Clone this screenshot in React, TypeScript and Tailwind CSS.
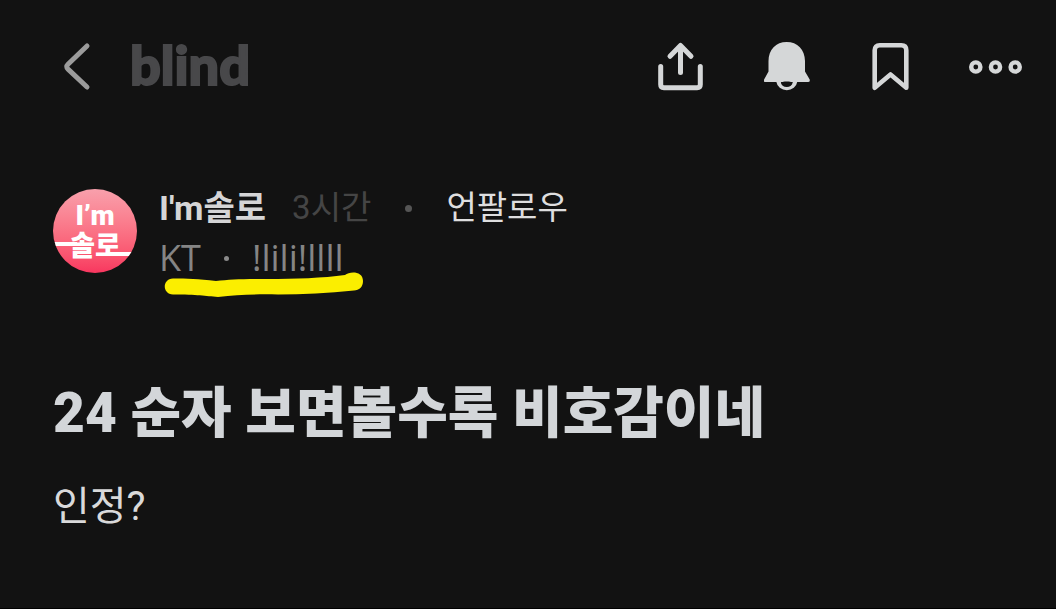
const navIcon = "block text-[#d5d7d8]";

function BackIcon() {
  return (
    <svg className="block text-[#9b9b9b]" width="30" height="50" viewBox="0 0 30 50" fill="none" stroke="currentColor" strokeWidth="5" strokeLinecap="round" strokeLinejoin="round">
      <path d="M25 4L6 22.300Q3.500 24.700 6 27.100L25 45" />
    </svg>
  );
}

function ShareIcon() {
  return (
    <svg className={navIcon} width="48" height="52" viewBox="0 0 48 52" fill="none" stroke="currentColor" strokeWidth="5" strokeLinecap="round" strokeLinejoin="round">
      <path d="M2.7 25.5V43.5Q2.7 46.7 5.9 46.7H39.1Q42.3 46.7 42.3 43.5V25.5" />
      <path d="M22.500 31.500V5M12 15.300L22.500 4.500L33 15.300" />
    </svg>
  );
}

function BellIcon() {
  return (
    <svg className={navIcon} width="48" height="52" viewBox="0 0 48 52" fill="none">
      <path d="M4.5 20C4.5 8.5 12 1 22.7 1S41 8.5 41 20V30.5L45.7 38.5Q46.3 41 44 41H1.5Q-.8 41 .1 38.5L4.5 30.5Z" fill="currentColor" />
      <path d="M14.3 40A8.600 8.200 0 0 0 31.300 40" stroke="currentColor" strokeWidth="4.400" />
      <path d="M17 41.500C19 40 26.500 40 28.500 41.500A5.700 4.500 0 0 1 17 41.500Z" fill="#121212" />
    </svg>
  );
}

function BookmarkIcon() {
  return (
    <svg className={navIcon} width="40" height="52" viewBox="0 0 40 52" fill="none" stroke="currentColor" strokeWidth="4.6" strokeLinejoin="round">
      <path d="M4.7 46.7V9.3Q4.7 4.3 9.7 4.3H31.3Q36.3 4.3 36.3 9.3V46.7L20.5 33.5Z" />
    </svg>
  );
}

function MoreIcon() {
  return (
    <svg className={navIcon} width="56" height="16" viewBox="0 0 56 16" fill="none" stroke="currentColor" strokeWidth="4.4">
      <circle cx="7.8" cy="8" r="4.6" />
      <circle cx="27.5" cy="8" r="4.6" />
      <circle cx="47.2" cy="8" r="4.6" />
    </svg>
  );
}

function TopBar() {
  return (
    <header className="flex items-center justify-between pt-[39px] pr-8 pl-[62px]">
      <div className="flex items-center gap-[38px]">
        <button type="button" aria-label="뒤로">
          <BackIcon />
        </button>
        <a href="#" className="pb-1 [font-family:'Lato',sans-serif] text-[54px] leading-[52px] font-black text-[#48484a] [-webkit-text-stroke:2px_#48484a]">
          blind
        </a>
      </div>
      <nav className="flex items-center gap-[58px]">
        <button type="button" aria-label="공유">
          <ShareIcon />
        </button>
        <button type="button" aria-label="알림">
          <BellIcon />
        </button>
        <button type="button" aria-label="북마크">
          <BookmarkIcon />
        </button>
        <button type="button" aria-label="더보기">
          <MoreIcon />
        </button>
      </nav>
    </header>
  );
}

function ChannelAvatar() {
  return (
    <div className="relative flex size-[84px] shrink-0 flex-col items-center overflow-hidden rounded-full bg-linear-to-b from-[#f8a0ac] to-[#f8365f] pt-[11px] text-[28px] leading-[31px] font-black text-white">
      <span>I’m</span>
      <span>솔로</span>
      {/* strokes running out of the lettering to both edges */}
      <span className="absolute top-[53px] left-0 h-1 w-6 bg-white" />
      <span className="absolute top-[63px] right-0 h-1 w-7 bg-white" />
    </div>
  );
}

function Highlight() {
  return (
    <svg className="absolute top-[38px] left-1" width="202" height="30" viewBox="0 0 202 30" fill="#fbee00">
      <path d="M10 7.500C24 7.500 35 8 53 10C67 8.500 80 8 105 8C132 8 160 7 182 4C187 0 200 0 200 10C200 16 196 19.500 191 19.500C165 22 140 23.500 115 23.500C90 23 75 24 55 26C42 25 35 23.500 10 23.500C-1 23 -1 8 10 7.500Z" />
    </svg>
  );
}

function AuthorRow() {
  return (
    <section className="mt-[84px] flex items-center gap-[22px] px-[53px]">
      <ChannelAvatar />
      <div className="pt-1 text-[33px] leading-[50px]">
        <div className="flex items-center">
          <a href="#" className="text-[34px] font-bold text-[#d5d5d6]">
            I'm솔로
          </a>
          <span className="ml-[26px] text-[#454545]">3시간</span>
          <span className="mx-[34px] size-[7px] rounded-full bg-[#555]" />
          <button type="button" className="text-[#dededf]">
            언팔로우
          </button>
        </div>
        <div className="relative flex items-center [font-family:'Open_Sans',sans-serif] text-[36px] text-[#858585]">
          <span>KT</span>
          <span className="mx-[23px] size-[5px] rounded-full bg-[#8a8a8a]" />
          <span>!lili!llll</span>
          <Highlight />
        </div>
      </div>
    </section>
  );
}

export default function App() {
  return (
    <div className="min-h-screen border-b border-black bg-[#121212] [font-family:'Roboto','Noto_Sans_CJK_KR',sans-serif]">
      <TopBar />
      <main>
        <AuthorRow />
        <article className="mt-[90px] px-[53px]">
          <h1 className="text-[55px] leading-[80px] font-black text-[#d3d6d9]">24 순자 보면볼수록 비호감이네</h1>
          <p className="mt-6 text-[40px] leading-[60px] text-[#d9d9da]">인정?</p>
        </article>
      </main>
    </div>
  );
}
